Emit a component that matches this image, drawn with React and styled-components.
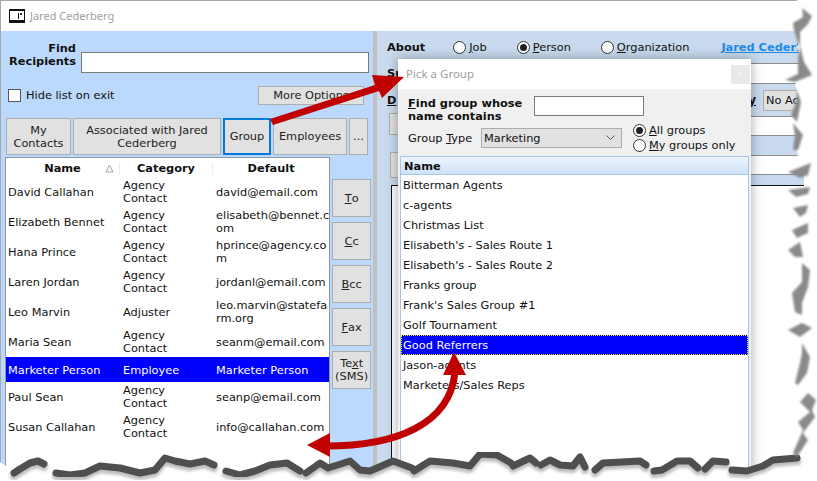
import styled, { createGlobalStyle } from "styled-components";

const GlobalStyle = createGlobalStyle`
  html, body {
    margin: 0;
    height: 100%;
    overflow: hidden;
    background: #fff;
  }
  * {
    box-sizing: border-box;
  }
`;

const Page = styled.div`
  position: relative;
  width: 817px;
  height: 481px;
  overflow: hidden;
  background: #fff;
  font-family: "DejaVu Sans", Verdana, sans-serif;
  font-size: 11.35px;
  line-height: 13px;
  color: #111;
`;

const Window = styled.div`
  display: flex;
  flex-direction: column;
  width: 804px;
  height: 481px;
  border-top: 1px solid #a8a8a8;
  border-left: 1px solid #a8a8a8;
`;

const TitleBar = styled.div`
  display: flex;
  align-items: center;
  flex: 0 0 30px;
  gap: 5px;
  padding: 0 0 0 8px;
  color: #a0a0a0;
  font-family: "Noto Sans", sans-serif;
  font-size: 11px;
`;

const TitleText = styled.span`
  margin-bottom: 2px;
`;

const Panes = styled.div`
  display: flex;
  flex: 1;
  min-height: 0;
`;

const LeftPane = styled.div`
  display: flex;
  flex-direction: column;
  flex: 0 0 372px;
  padding: 11px 0 0 4px;
  background: #bbd9fc;
`;

const Splitter = styled.div`
  flex: 0 0 4px;
  background: #c0c0c0;
`;

const RightPane = styled.div`
  display: flex;
  flex-direction: column;
  flex: 1;
  min-width: 0;
  background: #c9daee;
`;

const FindRow = styled.div`
  display: flex;
  align-items: flex-start;
  height: 44px;
`;

const FindLabel = styled.div`
  width: 71px;
  text-align: right;
  font-weight: 700;
`;

const TextInput = styled.div`
  width: ${(p) => p.$width}px;
  height: ${(p) => p.$height || 21}px;
  margin-left: ${(p) => p.$left || 0}px;
  margin-top: ${(p) => p.$top || 0}px;
  background: #fff;
  border: 1px solid #7a7a7a;
`;

const OptionsRow = styled.div`
  display: flex;
  align-items: stretch;
  justify-content: space-between;
  height: 19px;
  padding: 0 9px 0 3px;
`;

const CheckLabel = styled.label`
  display: flex;
  align-items: center;
  gap: 5px;
`;

const CheckBox = styled.span`
  width: 13px;
  height: 13px;
  background: #fff;
  border: 1px solid #555;
`;

const Button = styled.div`
  display: flex;
  align-items: center;
  justify-content: center;
  flex: ${(p) => (p.$width ? `0 0 ${p.$width}px` : "1")};
  text-align: center;
  background: #e1e1e1;
  color: #222;
  border: 1px solid #adadad;
  white-space: nowrap;
  ${(p) => p.$active && "border: 2px solid #0078d7;"}
`;

const TabsRow = styled.div`
  display: flex;
  gap: 2px;
  height: 37px;
  margin: 13px 0 2px 1px;
`;

const ListArea = styled.div`
  display: flex;
  flex: 1;
  min-height: 0;
`;

const ContactList = styled.div`
  flex: 0 0 325px;
  background: #fff;
  border: 1px solid #8b97a8;
  border-bottom: 0;
`;

const ContactHeader = styled.div`
  display: grid;
  grid-template-columns: 114px 93px 1fr;
  height: 19px;
  padding-top: 1px;
  font-weight: 700;
  text-align: center;
  align-items: center;
`;

const HeaderCell = styled.div`
  position: relative;
  border-right: 1px solid #ececec;
  &:last-child {
    border-right: 0;
  }
`;

const SortMark = styled.svg`
  position: absolute;
  right: 5px;
  top: 2px;
`;

const ContactRow = styled.div`
  display: grid;
  grid-template-columns: 114px 93px 1fr;
  align-items: center;
  height: ${(p) => (p.$selected ? 25 : 30)}px;
  padding-top: ${(p) => (p.$selected ? 1 : 0)}px;
  background: ${(p) => (p.$selected ? "#0000ff" : "#fff")};
  color: ${(p) => (p.$selected ? "#fff" : "#111")};
`;

const NameCell = styled.div`
  padding-left: 2px;
`;

const CategoryCell = styled.div`
  padding: 0 26px 0 3px;
`;

const EmailCell = styled.div`
  padding-left: 3px;
  white-space: pre-line;
`;

const SideButtons = styled.div`
  display: flex;
  flex-direction: column;
  gap: 5px;
  flex: 0 0 39px;
  margin: 22px 0 0 2px;
`;

const SideButton = styled(Button)`
  flex: 0 0 38px;
  & u {
    text-underline-offset: 1px;
  }
`;

const AboutRow = styled.div`
  display: flex;
  align-items: center;
  height: 32px;
  padding-left: 10px;
  white-space: nowrap;
`;

const BoldLabel = styled.span`
  font-weight: 700;
  flex: none;
`;

const RadioItem = styled.label`
  display: flex;
  align-items: center;
  gap: 3px;
  white-space: nowrap;
  margin-left: ${(p) => p.$left || 0}px;
`;

const Radio = styled.span`
  position: relative;
  width: 13px;
  height: 13px;
  flex: none;
  background: #fff;
  border: 1px solid #333;
  border-radius: 50%;
  ${(p) =>
    p.$checked &&
    `&::after {
      content: "";
      position: absolute;
      inset: 2px;
      border-radius: 50%;
      background: #222;
    }`}
`;

const PersonLink = styled.a`
  margin-left: 32px;
  color: #1d8ae8;
  font-weight: 700;
  text-decoration: underline;
`;

const FieldRow = styled.div`
  display: flex;
  align-items: center;
  height: ${(p) => p.$height}px;
  padding-left: ${(p) => p.$left || 10}px;
`;

const FieldInput = styled.div`
  flex: 1;
  align-self: stretch;
  margin-left: ${(p) => p.$left || 0}px;
  background: #fff;
  border-top: 1px solid #8d8d8d;
  border-bottom: 1px solid #8d8d8d;
`;

const StubButton = styled.div`
  flex: 0 0 30px;
  align-self: flex-start;
  height: ${(p) => p.$height}px;
  margin-top: -3px;
  margin-right: 4px;
  background: #e1e1e1;
  border: 1px solid #adadad;
`;

const Spacer = styled.div`
  flex: 1;
`;

const PriorityLabel = styled.u`
  font-weight: 700;
  font-size: 12px;
`;

const ActionButton = styled.div`
  flex: 0 0 70px;
  height: 21px;
  margin: 0 -29px 0 7px;
  padding: 3px 2px;
  background: #e1e1e1;
  border: 1px solid #adadad;
  white-space: nowrap;
`;

const BodyBox = styled.div`
  flex: 1;
  margin-left: 14px;
  background: #fff;
  border-top: 1px solid #111;
  border-left: 1px solid #111;
`;

const Dialog = styled.div`
  position: absolute;
  left: 398px;
  top: 59px;
  bottom: 0;
  width: 353px;
  display: flex;
  flex-direction: column;
  background: #f0f0f0;
  box-shadow: 0 0 11px rgba(0, 0, 0, 0.35);
`;

const DialogTitle = styled.div`
  display: flex;
  align-items: center;
  justify-content: space-between;
  flex: 0 0 30px;
  padding: 0 1px 0 8px;
  background: #fff;
  color: #a0a0a0;
  font-family: "Noto Sans", sans-serif;
  font-size: 11.5px;
`;

const CloseButton = styled.div`
  display: flex;
  align-items: center;
  justify-content: center;
  width: 19px;
  height: 19px;
  background: #e9e9e9;
  color: #f8f8f8;
  font-size: 10px;
`;

const DialogFind = styled.div`
  display: flex;
  align-items: flex-start;
  height: 35px;
  padding: 7px 0 0 10px;
`;

const DialogFindLabel = styled.div`
  width: 126px;
  margin-top: 1px;
  font-weight: 700;
`;

const GroupRow = styled.div`
  display: flex;
  align-items: flex-start;
  height: 32px;
  padding-left: 10px;
`;

const GroupLabel = styled.span`
  width: 73px;
  margin-top: 8px;
`;

const GroupSelect = styled.div`
  display: flex;
  align-items: center;
  justify-content: space-between;
  width: 141px;
  height: 20px;
  margin-top: 4px;
  padding: 0 6px 0 2px;
  background: #e1e1e1;
  border: 1px solid #adadad;
`;

const GroupRadios = styled.div`
  display: flex;
  flex-direction: column;
  gap: 2px;
  margin: 0 0 0 11px;
`;

const GroupList = styled.div`
  flex: 1;
  margin: 0 2px;
  background: #fff;
  border: 1px solid #a9c4e8;
  border-top: 0;
`;

const GroupHeader = styled.div`
  display: flex;
  align-items: center;
  height: 19px;
  padding: 1px 0 0 3px;
  font-weight: 700;
  background: linear-gradient(#edf5fe, #cfe2f8);
  border: 1px solid #a9c4e8;
  margin: 0 -1px;
`;

const GroupItem = styled.div`
  display: flex;
  align-items: center;
  height: 20px;
  padding-left: 2px;
  ${(p) =>
    p.$selected &&
    `
    background: #0000ff;
    color: #fff;
    outline: 1px dotted #ffe600;
    outline-offset: -1px;
  `}
`;

const Overlay = styled.svg`
  position: absolute;
  left: 0;
  top: 0;
  pointer-events: none;
`;

const contacts = [
  { name: "David Callahan", category: "Agency Contact", email: "david@email.com" },
  { name: "Elizabeth Bennet", category: "Agency Contact", email: "elisabeth@bennet.c\nom" },
  { name: "Hana Prince", category: "Agency Contact", email: "hprince@agency.co\nm" },
  { name: "Laren Jordan", category: "Agency Contact", email: "jordanl@email.com" },
  { name: "Leo Marvin", category: "Adjuster", email: "leo.marvin@statefa\nrm.org" },
  { name: "Maria Sean", category: "Agency Contact", email: "seanm@email.com" },
  { name: "Marketer Person", category: "Employee", email: "Marketer Person", selected: true },
  { name: "Paul Sean", category: "Agency Contact", email: "seanp@email.com" },
  { name: "Susan Callahan", category: "Agency Contact", email: "info@callahan.com" },
];

const groups = [
  "Bitterman Agents",
  "c-agents",
  "Christmas List",
  "Elisabeth's - Sales Route 1",
  "Elisabeth's - Sales Route 2",
  "Franks group",
  "Frank's Sales Group #1",
  "Golf Tournament",
  "Good Referrers",
  "Jason-agents",
  "Marketers/Sales Reps",
];

// torn paper edge, traced from the screenshot
const tearRight =
  "797,0 800,12 795,24 800,36 797,48 803,62 806,76 795,84 799,98 796,112 793,124 800,136 797,150 799,165 805,176 805,186 797,192 800,210 800,232 796,248 802,262 795,290 802,310 802,330 802,350 797,384 802,404 806,420 800,436 797,456";
const tearBottom =
  "773,457 763,463 747,468 730,467 727,465 713,458 703,467 698,465 690,458 677,458 662,467 652,468 648,465 640,458 603,460 593,467 585,463 580,453 573,463 560,462 550,457 540,462 530,455 513,463 497,452 480,451 470,463 453,460 430,458 413,468 393,458 370,468 360,467 350,458 328,465 320,460 303,472 287,460 270,462 255,468 240,472 225,468 213,462 205,458 190,461 175,458 165,455 155,467 140,470 120,465 100,463 85,470 70,472 55,470 44,461 38,458 30,460 20,466 13,470 6,466 0,462";

const bandSegments = [
  "797,458 773,460 763,466 747,471 732,470",
  "726,462 713,461 705,469",
  "698,468 690,461 677,461 662,470 654,471",
  "646,465 640,461 603,463 595,470",
  "585,467 580,457 573,466 560,465 550,460 541,465",
  "536,463 530,458 513,466",
  "511,463 497,455 480,454 470,466 453,463 430,461 414,471",
  "412,468 393,461 370,471 360,470 350,461 328,468 320,463 306,473",
  "300,471 287,463 270,465 255,471 240,475 226,471",
  "214,465 205,461 190,464 175,461 165,458 155,470 140,473 120,468 100,466 85,473 70,475 56,473",
  "44,464 38,461 30,463 20,469 14,473",
];

const edgeShapes = [
  "802,8 812,16 808,24 800,32 800,48 794,30 793,23 803,17",
  "800,45 804,62 812,75 795,82 785,80 798,74 798,60",
  "797,90 801,102 797,122 791,115 796,102",
  "793,123 803,135 798,150 793,150 795,135",
  "788,172 811,163 808,175 800,178",
  "788,190 810,187 808,194 796,197",
  "793,208 808,205 806,213 800,217",
  "792,230 808,223 808,233 797,238",
  "788,250 800,242 803,257 795,257",
  "802,263 810,270 808,287 802,303 802,315 795,312 792,293 802,282",
  "788,330 802,323 812,328 800,337",
  "802,343 810,357 807,373 798,385 795,383 800,363 802,353",
  "800,402 808,393 816,400 812,410 815,417 803,433 808,440 797,457 793,453 803,430 798,422 810,412",
];

function TornEdge() {
  return (
    <g>
      <polygon points={`${tearRight} ${tearBottom} 0,481 817,481 817,0`} fill="#fff" />
      <g filter="url(#edgeBlur)">
        {bandSegments.map((points) => (
          <polyline
            key={points}
            points={points}
            fill="none"
            stroke="#bdbdbd"
            strokeWidth="8"
            strokeLinejoin="round"
            strokeLinecap="round"
            transform="translate(0 3)"
          />
        ))}
      </g>
      <g filter="url(#edgeSoft)">
        {bandSegments.map((points) => (
          <polyline
            key={points}
            points={points}
            fill="none"
            stroke="#4f4f4f"
            strokeWidth="7"
            strokeLinejoin="round"
            strokeLinecap="round"
          />
        ))}
      </g>
      <g filter="url(#edgeSide)">
        {edgeShapes.map((points) => (
          <polygon key={points} points={points} fill="#8a8a8a" />
        ))}
      </g>
    </g>
  );
}

function Arrows() {
  return (
    <g fill="#c00000" stroke="none">
      <polygon points="270,119 375,85 372,75 404,77 382,98 379,91 273,125" />
      <path d="M326 446 C 395 446, 450 425, 455 372" fill="none" stroke="#c00000" strokeWidth="7" />
      <polygon points="307,445 330,433 330,457" />
      <polygon points="454,352 443,375 466,375" />
    </g>
  );
}

function App() {
  return (
    <Page>
      <GlobalStyle />
      <Window>
        <TitleBar>
          <svg width="16" height="14" viewBox="0 0 16 14">
            <rect x="0" y="0" width="16" height="14" fill="#fff" />
            <rect x="0.5" y="1.5" width="15" height="10" fill="#fff" stroke="#111" />
            <rect x="0" y="0" width="16" height="2" fill="#111" />
            <rect x="0" y="12" width="16" height="2" fill="#111" />
            <rect x="9" y="4" width="1" height="6" fill="#111" />
            <rect x="11" y="4" width="2" height="2" fill="#333" />
          </svg>
          <TitleText>Jared Cederberg</TitleText>
        </TitleBar>
        <Panes>
          <LeftPane>
            <FindRow>
              <FindLabel>
                Find
                <br />
                Recipients
              </FindLabel>
              <TextInput $width={288} $left={5} $top={10} />
            </FindRow>
            <OptionsRow>
              <CheckLabel>
                <CheckBox />
                Hide list on exit
              </CheckLabel>
              <Button $width={106}>More Options</Button>
            </OptionsRow>
            <TabsRow>
              <Button $width={65}>
                My
                <br />
                Contacts
              </Button>
              <Button $width={148}>
                Associated with Jared
                <br />
                Cederberg
              </Button>
              <Button $width={48} $active>
                Group
              </Button>
              <Button $width={74}>Employees</Button>
              <Button $width={19}>...</Button>
            </TabsRow>
            <ListArea>
              <ContactList>
                <ContactHeader>
                  <HeaderCell>
                    Name
                    <SortMark width="9" height="9" viewBox="0 0 9 9">
                      <path d="M4.5 1 L8 8 H1 Z" fill="none" stroke="#a5a5a5" />
                    </SortMark>
                  </HeaderCell>
                  <HeaderCell>Category</HeaderCell>
                  <HeaderCell>Default</HeaderCell>
                </ContactHeader>
                {contacts.map((contact) => (
                  <ContactRow key={contact.name} $selected={contact.selected}>
                    <NameCell>{contact.name}</NameCell>
                    <CategoryCell>{contact.category}</CategoryCell>
                    <EmailCell>{contact.email}</EmailCell>
                  </ContactRow>
                ))}
              </ContactList>
              <SideButtons>
                <SideButton>
                  <u>T</u>o
                </SideButton>
                <SideButton>
                  <u>C</u>c
                </SideButton>
                <SideButton>
                  <u>B</u>cc
                </SideButton>
                <SideButton>
                  <u>F</u>ax
                </SideButton>
                <SideButton>
                  <span>
                    Te<u>x</u>t
                    <br />
                    (SMS)
                  </span>
                </SideButton>
              </SideButtons>
            </ListArea>
          </LeftPane>
          <Splitter />
          <RightPane>
            <AboutRow>
              <BoldLabel>About</BoldLabel>
              <RadioItem $left={28}>
                <Radio />
                <span>
                  <u>J</u>ob
                </span>
              </RadioItem>
              <RadioItem $left={30}>
                <Radio $checked />
                <span>
                  <u>P</u>erson
                </span>
              </RadioItem>
              <RadioItem $left={30}>
                <Radio />
                <span>
                  <u>O</u>rganization
                </span>
              </RadioItem>
              <PersonLink>Jared Cederberg</PersonLink>
            </AboutRow>
            <FieldRow $height={21}>
              <BoldLabel>Su</BoldLabel>
              <FieldInput $left={60} />
            </FieldRow>
            <FieldRow $height={32}>
              <BoldLabel>
                <u>D</u>
              </BoldLabel>
              <Spacer />
              <PriorityLabel>y</PriorityLabel>
              <ActionButton>No Action</ActionButton>
            </FieldRow>
            <FieldRow $height={20} $left={12}>
              <StubButton $height={22} />
              <FieldInput />
            </FieldRow>
            <FieldRow $height={19} />
            <FieldRow $height={20} $left={13}>
              <StubButton $height={26} />
              <FieldInput />
            </FieldRow>
            <FieldRow $height={10} />
            <BodyBox />
          </RightPane>
        </Panes>
      </Window>
      <Dialog>
        <DialogTitle>
          <TitleText>Pick a Group</TitleText>
          <CloseButton>×</CloseButton>
        </DialogTitle>
        <DialogFind>
          <DialogFindLabel>
            <u>F</u>ind group whose
            <br />
            name contains
          </DialogFindLabel>
          <TextInput $width={110} $height={20} />
        </DialogFind>
        <GroupRow>
          <GroupLabel>
            Group <u>T</u>ype
          </GroupLabel>
          <GroupSelect>
            Marketing
            <svg width="9" height="6" viewBox="0 0 9 6">
              <path d="M0.5 0.5 L4.5 4.5 L8.5 0.5" fill="none" stroke="#555" />
            </svg>
          </GroupSelect>
          <GroupRadios>
            <RadioItem>
              <Radio $checked />
              <span>
                <u>A</u>ll groups
              </span>
            </RadioItem>
            <RadioItem>
              <Radio />
              <span>
                <u>M</u>y groups only
              </span>
            </RadioItem>
          </GroupRadios>
        </GroupRow>
        <GroupList>
          <GroupHeader>Name</GroupHeader>
          {groups.map((group) => (
            <GroupItem key={group} $selected={group === "Good Referrers"}>
              {group}
            </GroupItem>
          ))}
        </GroupList>
      </Dialog>
      <Overlay width="817" height="481" viewBox="0 0 817 481">
        <defs>
          <filter id="edgeSoft" x="-5%" y="-5%" width="110%" height="110%">
            <feGaussianBlur stdDeviation="0.6" />
          </filter>
          <filter id="edgeSide" x="-5%" y="-5%" width="110%" height="110%">
            <feGaussianBlur stdDeviation="0.9" />
          </filter>
          <filter id="edgeBlur" x="-5%" y="-5%" width="110%" height="110%">
            <feGaussianBlur stdDeviation="1.5" />
          </filter>
        </defs>
        <TornEdge />
        <Arrows />
      </Overlay>
    </Page>
  );
}

export default App;
